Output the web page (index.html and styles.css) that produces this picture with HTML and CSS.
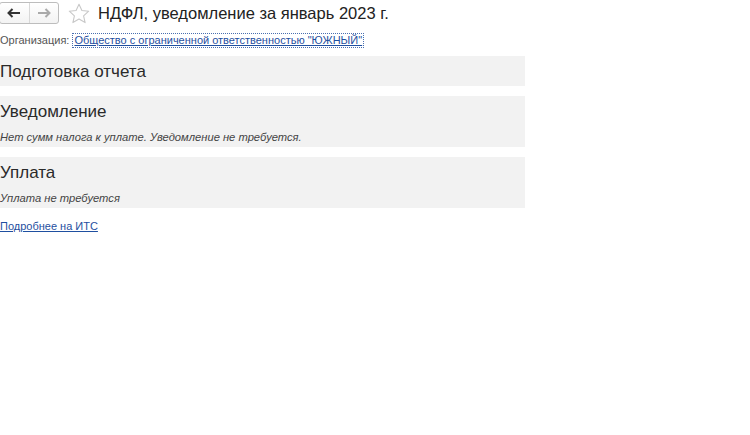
FILE: index.html
```html
<!DOCTYPE html>
<html lang="ru">
<head>
<meta charset="utf-8">
<link rel="stylesheet" href="styles.css">
</head>
<body>
<div class="page">
  <header class="top">
    <div class="nav">
      <button class="nav-btn back" aria-label="Назад">
        <svg width="14" height="10" viewBox="0 0 14 10"><path d="M1 5h12M5.5 1L1.5 5l4 4" fill="none" stroke="#333" stroke-width="2"/></svg>
      </button>
      <button class="nav-btn fwd" aria-label="Вперёд">
        <svg width="14" height="10" viewBox="0 0 14 10"><path d="M1 5h12M8.5 1l4 4-4 4" fill="none" stroke="#aaa" stroke-width="2"/></svg>
      </button>
    </div>
    <svg class="star" width="22" height="21" viewBox="0 0 22 21"><path d="M11 1.2l2.9 6.3 6.8.7-5.1 4.6 1.5 6.8L11 16.1l-6.1 3.5 1.5-6.8L1.3 8.2l6.8-.7z" fill="none" stroke="#c8c8c8" stroke-width="1.1" stroke-linejoin="round"/></svg>
    <h1 class="title">НДФЛ, уведомление за январь 2023 г.</h1>
  </header>
  <div class="org">
    <span class="org-label">Организация:</span>
    <a class="org-link" href="#">Общество с ограниченной ответственностью "ЮЖНЫЙ"</a>
  </div>
  <section class="panel panel-single">
    <h2 class="panel-title">Подготовка отчета</h2>
  </section>
  <section class="panel">
    <h2 class="panel-title">Уведомление</h2>
    <p class="panel-note">Нет сумм налога к уплате. Уведомление не требуется.</p>
  </section>
  <section class="panel">
    <h2 class="panel-title">Уплата</h2>
    <p class="panel-note">Уплата не требуется</p>
  </section>
  <a class="more" href="#">Подробнее на ИТС</a>
</div>
</body>
</html>
```
FILE: styles.css
```css
* { box-sizing: border-box; }
html, body { margin: 0; padding: 0; background: #fff; }
body { font-family: "Liberation Sans", Arial, sans-serif; color: #333; }
.page { width: 750px; height: 435px; overflow: hidden; padding-top: 1px; }
.top { display: flex; align-items: center; height: 24px; }
.nav { display: flex; width: 60px; height: 22px; border: 1px solid #bdbdbd; border-radius: 3px; background: linear-gradient(#fff, #f3f3f3); margin-left: -1px; }
.nav-btn { flex: 1; border: 0; background: transparent; padding: 0; display: flex; align-items: center; justify-content: center; }
.nav-btn.back { border-right: 1px solid #d8d8d8; }
.star { margin-left: 9px; flex: none; }
.title { margin: 0 0 0 8px; font-size: 16.5px; font-weight: normal; color: #222; line-height: 24px; }
.org { display: flex; align-items: center; height: 18px; margin-top: 6px; font-size: 11px; }
.org-label { color: #555; }
.org-link { margin-left: 3px; color: #1f4fa0; border: 1px dotted #4a6fb0; padding: 0 1px; line-height: 13px; }
.panel { width: 525px; background: #f2f2f2; margin-top: 10px; padding: 5px 0 7px 0; }
.panel-single { margin-top: 7px; height: 30px; padding: 6px 0 0; }
.panel-title { margin: 0; font-size: 17px; font-weight: normal; color: #2a2a2a; line-height: 20px; }
.panel-note { margin: 8px 0 0; font-size: 11.2px; font-style: italic; color: #444; line-height: 14px; }
.panel:not(.panel-single) { padding-top: 6px; height: 51px; }
.more { display: inline-block; margin-top: 12px; font-size: 11px; color: #1f4fa0; }
```
